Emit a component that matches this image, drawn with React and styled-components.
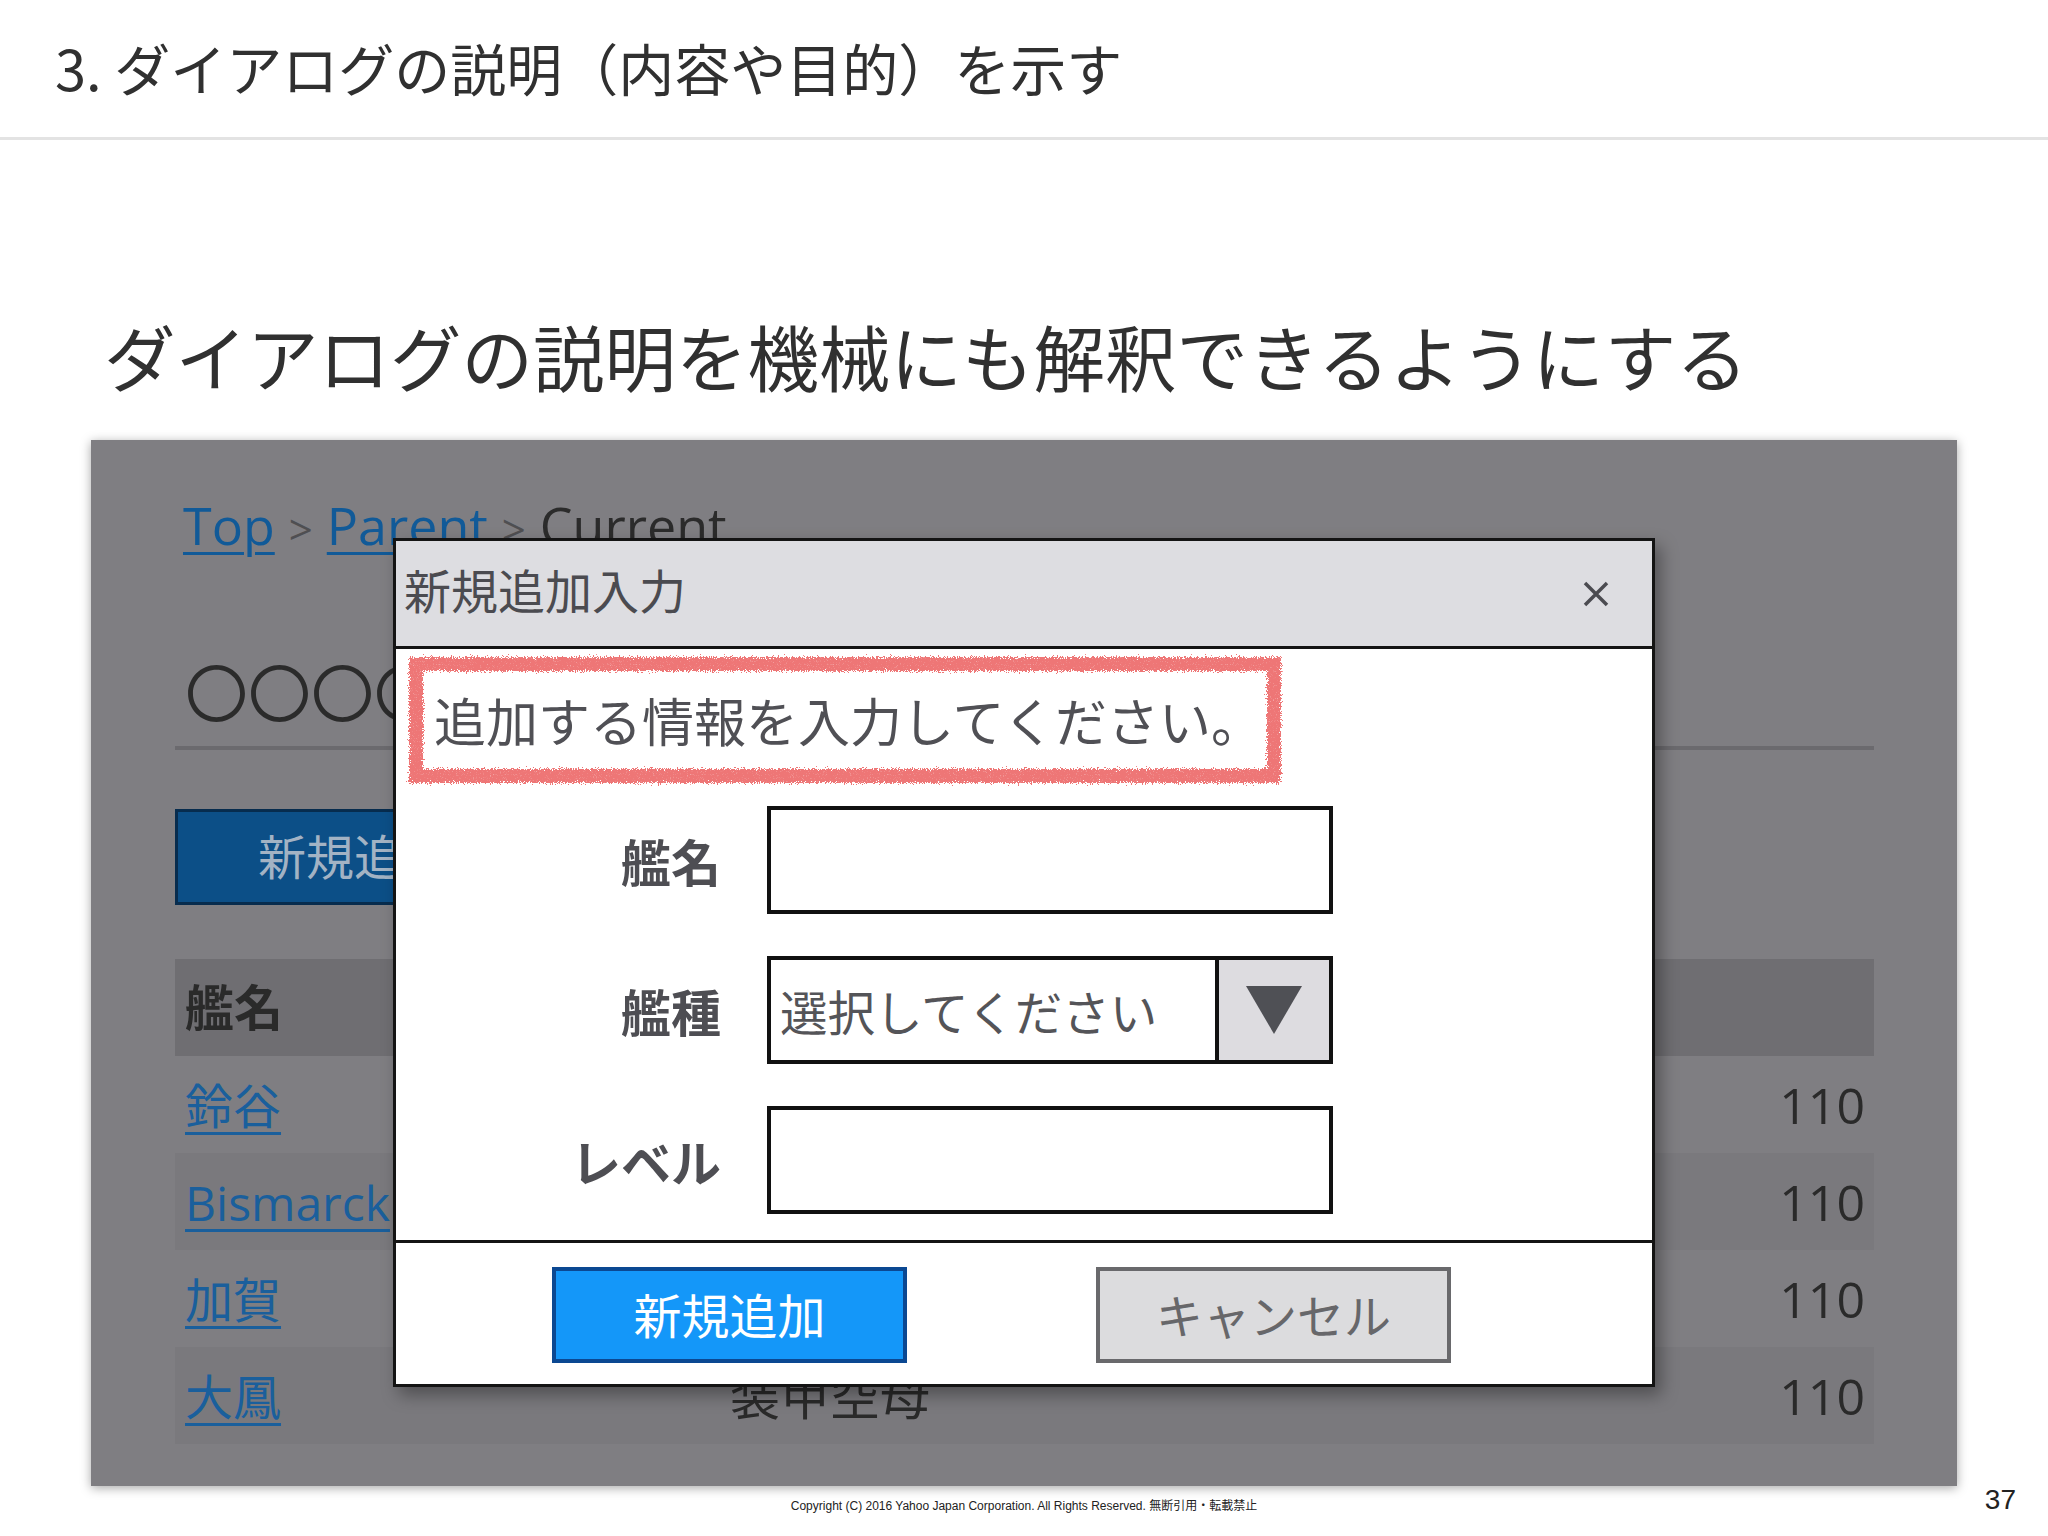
import React from 'react'
import styled, { createGlobalStyle } from 'styled-components'

const GlobalStyle = createGlobalStyle`
  html, body {
    margin: 0;
    padding: 0;
    background: #fff;
  }
  body {
    font-family: "Noto Sans CJK JP", "Noto Sans", sans-serif;
    color: #333;
  }
  * {
    box-sizing: border-box;
  }
`

const Slide = styled.div`
  width: 2048px;
  height: 1536px;
  display: flex;
  flex-direction: column;
  overflow: hidden;
  background: #fff;
`

const SlideHeader = styled.header`
  height: 140px;
  flex-shrink: 0;
  border-bottom: 3px solid #e3e3e3;
  display: flex;
  align-items: center;
  padding: 0 0 5px 55px;
`

const SlideTitle = styled.h1`
  margin: 0;
  font-size: 56px;
  font-weight: 400;
  color: #303030;
  white-space: nowrap;
`

const Lead = styled.h2`
  margin: 173px 0 0;
  padding-left: 104px;
  font-size: 71.5px;
  line-height: 85px;
  font-weight: 400;
  color: #303030;
  white-space: nowrap;
`

/* the page behind the modal, already dimmed */
const Panel = styled.section`
  position: relative;
  flex-shrink: 0;
  margin: 42px 0 0 91px;
  width: 1866px;
  background: #7f7e82;
  box-shadow: 0 2px 10px rgba(0, 0, 0, 0.35);
  padding: 54px 83px 42px 84px;
`

const Breadcrumb = styled.nav`
  font-family: "Open Sans", "Noto Sans CJK JP", sans-serif;
  font-size: 52px;
  line-height: 62px;
  padding-left: 8px;
  color: #2b2b2b;
  white-space: nowrap;
`

const Crumb = styled.a`
  color: #115a98;
  text-decoration: underline;
  text-decoration-thickness: 3px;
  text-underline-offset: 7px;
`

const CrumbSep = styled.span`
  color: #4f4f52;
  font-size: 42px;
  margin: 0 14px;
`

const PageHeading = styled.h3`
  margin: 91px 0 0;
  padding: 0 0 18px 10px;
  font-size: 63px;
  line-height: 77px;
  font-weight: 400;
  color: #2b2b2b;
  border-bottom: 4px solid #6b6a6e;
  white-space: nowrap;
  overflow: hidden;
`

const PageButton = styled.div`
  margin-top: 59px;
  width: 358px;
  height: 96px;
  padding-bottom: 6px;
  background: #0c4f87;
  border: 3px solid #072c4e;
  color: #a3b3c4;
  font-size: 48px;
  display: flex;
  align-items: center;
  justify-content: center;
`

const Table = styled.div`
  margin-top: 54px;
`

const Row = styled.div`
  display: grid;
  grid-template-columns: 545px 1fr 560px;
  height: 97px;
  align-items: center;
  background: ${({ $head, $striped }) =>
    $head ? '#6f6e72' : $striped ? '#7a797d' : '#7f7e82'};
`

const Cell = styled.div`
  padding: 0 ${({ $right }) => ($right ? '9px' : '10px')} 0 10px;
  font-family: "Open Sans", "Noto Sans CJK JP", sans-serif;
  font-size: ${({ $head }) => ($head ? '49px' : '50px')};
  line-height: 1;
  font-weight: ${({ $head }) => ($head ? 700 : 400)};
  text-align: ${({ $right }) => ($right ? 'right' : 'left')};
  color: #2a2a2a;
  white-space: nowrap;
`

const CellLink = styled.a`
  font-size: 48px;
  color: #1a5f9c;
  text-decoration: underline;
  text-decoration-thickness: 3px;
  text-underline-offset: 8px;
`

/* modal */
const Dialog = styled.div`
  position: absolute;
  left: 302px;
  top: 98px;
  width: 1262px;
  background: #fff;
  border: 3px solid #141414;
  box-shadow: 6px 8px 16px rgba(0, 0, 0, 0.35);
`

const DialogHeader = styled.div`
  height: 108px;
  background: #dddde1;
  border-bottom: 3px solid #141414;
  display: flex;
  align-items: center;
  justify-content: space-between;
  padding: 0 43px 0 8px;
`

const DialogTitle = styled.h4`
  margin: 0 0 10px;
  font-size: 47px;
  font-weight: 400;
  color: #4b4b50;
`

const CloseButton = styled.button`
  width: 26px;
  height: 26px;
  padding: 0;
  border: none;
  background: none;
  color: #4b4b50;
  display: flex;
`

const DialogBody = styled.div`
  padding: 8px 0 26px 13px;
`

const Description = styled.p`
  position: relative;
  width: fit-content;
  margin: 0;
  padding: 14px 18px 14px 25px;
  font-size: 52px;
  line-height: 98px;
  color: #505055;
  white-space: nowrap;

  &::before {
    content: '';
    position: absolute;
    inset: 0;
    border: 14px solid #ee7676;
    filter: url(#chalk);
    pointer-events: none;
  }
`

const Form = styled.div`
  margin-top: 23px;
  display: grid;
  grid-template-columns: 312px 566px;
  column-gap: 46px;
  row-gap: 42px;
`

const Label = styled.label`
  align-self: center;
  text-align: right;
  font-size: 50px;
  font-weight: 700;
  color: #4e4e53;
  white-space: nowrap;
`

const TextField = styled.input`
  height: 108px;
  border: 4px solid #111;
  background: #fff;
  outline: none;
  margin: 0;
`

const SelectBox = styled.div`
  height: 108px;
  border: 4px solid #111;
  display: flex;
  background: #fff;
`

const SelectText = styled.span`
  flex: 1;
  display: flex;
  align-items: center;
  padding-left: 9px;
  font-size: 47.5px;
  color: #545458;
  white-space: nowrap;
`

const SelectArrow = styled.span`
  width: 114px;
  border-left: 4px solid #111;
  background: #dddce0;
  display: flex;
  align-items: center;
  justify-content: center;
`

const DialogFooter = styled.div`
  border-top: 3px solid #141414;
  padding: 24px 0 21px 156px;
  display: flex;
  gap: 189px;
`

const Button = styled.button`
  width: 355px;
  height: 96px;
  margin: 0;
  padding: 0 0 4px;
  font-family: "Noto Sans CJK JP", sans-serif;
  font-size: ${({ $primary }) => ($primary ? '48px' : '47px')};
  color: ${({ $primary }) => ($primary ? '#fff' : '#67676a')};
  background: ${({ $primary }) => ($primary ? '#1497f9' : '#dcdcde')};
  border: 4px solid ${({ $primary }) => ($primary ? '#0b4892' : '#69696c')};
  display: flex;
  align-items: center;
  justify-content: center;
`

const SlideFooter = styled.footer`
  flex: 1;
  display: grid;
  grid-template-columns: 1fr auto 1fr;
`

const Copyright = styled.small`
  grid-column: 2;
  padding-top: 13px;
  font-family: "Liberation Sans", "Noto Sans CJK JP", sans-serif;
  font-size: 12px;
  line-height: 14px;
  color: #222;
  white-space: nowrap;
`

const PageNumber = styled.span`
  justify-self: end;
  padding-right: 32px;
  font-family: "Liberation Sans", sans-serif;
  font-size: 28px;
  line-height: 28px;
  color: #222;
`

const Defs = styled.svg`
  position: absolute;
  width: 0;
  height: 0;
`

const ships = [
  { name: '鈴谷', type: '重巡洋艦', level: 110 },
  { name: 'Bismarck', type: '戦艦', level: 110 },
  { name: '加賀', type: '正規空母', level: 110 },
  { name: '大鳳', type: '装甲空母', level: 110 },
]

const App = () => {
  return (
    <Slide>
      <GlobalStyle />
      <Defs aria-hidden="true">
        <filter id="chalk" x="-5%" y="-10%" width="110%" height="120%">
          <feTurbulence type="fractalNoise" baseFrequency="0.85" numOctaves="2" seed="3" result="noise" />
          <feDisplacementMap in="SourceGraphic" in2="noise" scale="9" xChannelSelector="R" yChannelSelector="G" result="disp" />
          <feTurbulence type="fractalNoise" baseFrequency="1.3" numOctaves="1" seed="9" result="grain" />
          <feColorMatrix in="grain" type="matrix" values="0 0 0 0 0  0 0 0 0 0  0 0 0 0 0  0 0 0 -1.6 1.95" result="mask" />
          <feComposite in="disp" in2="mask" operator="in" />
        </filter>
      </Defs>

      <SlideHeader>
        <SlideTitle>3. ダイアログの説明（内容や目的）を示す</SlideTitle>
      </SlideHeader>

      <Lead>ダイアログの説明を機械にも解釈できるようにする</Lead>

      <Panel>
        <Breadcrumb>
          <Crumb>Top</Crumb>
          <CrumbSep>&gt;</CrumbSep>
          <Crumb>Parent</Crumb>
          <CrumbSep>&gt;</CrumbSep>
          Current
        </Breadcrumb>

        <PageHeading>〇〇〇〇〇〇〇〇〇〇</PageHeading>

        <PageButton>新規追加</PageButton>

        <Table>
          <Row $head>
            <Cell $head>艦名</Cell>
            <Cell $head>艦種</Cell>
            <Cell $head>レベル</Cell>
          </Row>
          {ships.map((ship, i) => (
            <Row key={ship.name} $striped={i % 2 === 1}>
              <Cell>
                <CellLink>{ship.name}</CellLink>
              </Cell>
              <Cell>{ship.type}</Cell>
              <Cell $right>{ship.level}</Cell>
            </Row>
          ))}
        </Table>

        <Dialog role="dialog" aria-labelledby="dlg-title" aria-describedby="dlg-desc">
          <DialogHeader>
            <DialogTitle id="dlg-title">新規追加入力</DialogTitle>
            <CloseButton aria-label="閉じる">
              <svg width="26" height="26" viewBox="0 0 26 26">
                <path d="M2 2 L24 24 M24 2 L2 24" stroke="currentColor" strokeWidth="3.5" fill="none" />
              </svg>
            </CloseButton>
          </DialogHeader>

          <DialogBody>
            <Description id="dlg-desc">追加する情報を入力してください。</Description>

            <Form>
              <Label>艦名</Label>
              <TextField type="text" />

              <Label>艦種</Label>
              <SelectBox>
                <SelectText>選択してください</SelectText>
                <SelectArrow>
                  <svg width="56" height="48" viewBox="0 0 56 48">
                    <polygon points="0,0 56,0 28,48" fill="#4f5055" />
                  </svg>
                </SelectArrow>
              </SelectBox>

              <Label>レベル</Label>
              <TextField type="text" />
            </Form>
          </DialogBody>

          <DialogFooter>
            <Button $primary>新規追加</Button>
            <Button>キャンセル</Button>
          </DialogFooter>
        </Dialog>
      </Panel>

      <SlideFooter>
        <Copyright>
          Copyright (C) 2016 Yahoo Japan Corporation. All Rights Reserved. 無断引用・転載禁止
        </Copyright>
        <PageNumber>37</PageNumber>
      </SlideFooter>
    </Slide>
  )
}

export default App
